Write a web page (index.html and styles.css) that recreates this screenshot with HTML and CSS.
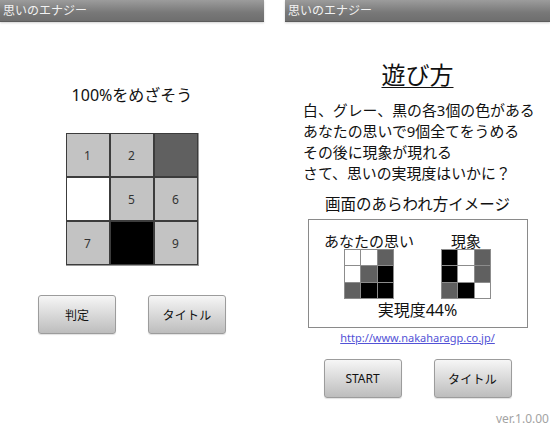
FILE: index.html
```html
<!DOCTYPE html>
<html lang="ja">
<head>
<meta charset="utf-8">
<title>思いのエナジー</title>
<link rel="stylesheet" href="styles.css">
</head>
<body>
<div class="device">
  <section class="screen screen-left">
    <header class="titlebar">思いのエナジー</header>
    <h1 class="goal">100%をめざそう</h1>
    <div class="board">
      <div class="cell gray">1</div>
      <div class="cell gray">2</div>
      <div class="cell dark"></div>
      <div class="cell white"></div>
      <div class="cell gray">5</div>
      <div class="cell gray">6</div>
      <div class="cell gray">7</div>
      <div class="cell black"></div>
      <div class="cell gray">9</div>
    </div>
    <div class="buttons">
      <button class="btn">判定</button>
      <button class="btn btn-kana">タイトル</button>
    </div>
  </section>

  <section class="screen screen-right">
    <header class="titlebar">思いのエナジー</header>
    <h1 class="howto">遊び方</h1>
    <p class="rules">白、グレー、黒の各3個の色がある<br>あなたの思いで9個全てをうめる<br>その後に現象が現れる<br>さて、思いの実現度はいかに？</p>
    <p class="caption">画面のあらわれ方イメージ</p>
    <div class="preview">
      <div class="preview-cols">
        <div class="preview-col">
          <span class="preview-label">あなたの思い</span>
          <div class="mini">
            <i class="m white"></i><i class="m white"></i><i class="m dark"></i>
            <i class="m white"></i><i class="m dark"></i><i class="m black"></i>
            <i class="m dark"></i><i class="m black"></i><i class="m black"></i>
          </div>
        </div>
        <div class="preview-col">
          <span class="preview-label">現象</span>
          <div class="mini">
            <i class="m black"></i><i class="m white"></i><i class="m dark"></i>
            <i class="m black"></i><i class="m white"></i><i class="m dark"></i>
            <i class="m dark"></i><i class="m black"></i><i class="m white"></i>
          </div>
        </div>
      </div>
      <p class="rate">実現度44%</p>
    </div>
    <a class="link" href="#">http://www.nakaharagp.co.jp/</a>
    <div class="buttons buttons-right">
      <button class="btn">START</button>
      <button class="btn btn-kana">タイトル</button>
    </div>
    <p class="version">ver.1.0.00</p>
  </section>
</div>
</body>
</html>
```

FILE: styles.css
```css
* { box-sizing: border-box; }

html, body {
  margin: 0;
  padding: 0;
  background: #ffffff;
}

body {
  width: 550px;
  height: 430px;
  overflow: hidden;
  font-family: "Noto Sans", "Noto Sans CJK JP", sans-serif;
  color: #111;
}

.device {
  display: flex;
  gap: 21px;
  height: 430px;
}

.screen {
  display: flex;
  flex-direction: column;
  align-items: center;
  height: 430px;
  background: #fff;
}

.screen-left { width: 264px; }
.screen-right { width: 265px; }

.titlebar {
  align-self: stretch;
  height: 22px;
  padding-left: 3px;
  font-size: 12px;
  line-height: 21px;
  color: #f2f2f2;
  background: linear-gradient(#9c9c9c, #787878 60%, #6e6e6e);
  border-bottom: 1px solid #5c5c5c;
  box-shadow: 0 1px 2px rgba(0, 0, 0, 0.18);
}

/* left screen */
.goal {
  margin: 62px 0 0;
  font-size: 16px;
  font-weight: normal;
  line-height: 22px;
  color: #111;
}

.board {
  margin-top: 27px;
  display: grid;
  grid-template-columns: repeat(3, 42px);
  grid-template-rows: repeat(3, 42px);
  gap: 2px;
  padding: 1px;
  background: #3c3c3c;
  border-right: 1px solid #9a9a9a;
  border-bottom: 1px solid #9a9a9a;
}

.cell {
  display: flex;
  align-items: center;
  justify-content: center;
  font-size: 12px;
  color: #333;
}

.gray { background: #c3c3c3; }
.dark { background: #606060; }
.white { background: #ffffff; }
.black { background: #000000; }

.buttons {
  margin-top: 29px;
  display: flex;
  gap: 32px;
}

.btn {
  width: 78px;
  height: 39px;
  padding: 0;
  border: 1px solid #9c9c9c;
  border-radius: 3px;
  background: linear-gradient(#f6f6f6, #dcdcdc 45%, #bdbdbd);
  font-family: inherit;
  font-size: 12px;
  color: #111;
  box-shadow: 0 1px 1px rgba(0, 0, 0, 0.12);
}

.btn-kana { letter-spacing: 0.3px; }

/* right screen */
.howto {
  margin: 38px 0 0;
  font-size: 24px;
  font-weight: normal;
  line-height: 30px;
  text-decoration: underline;
  text-decoration-thickness: 1px;
  text-underline-offset: 3px;
}

.rules {
  align-self: stretch;
  margin: 10px 0 0 18px;
  font-size: 14.9px;
  line-height: 21px;
  white-space: nowrap;
}

.caption {
  margin: 10px 0 0;
  font-size: 15.5px;
  line-height: 20px;
}

.preview {
  margin-top: 5px;
  width: 220px;
  height: 109px;
  border: 1px solid #8a8a8a;
  padding-top: 14px;
  display: flex;
  flex-direction: column;
  align-items: center;
}

.preview-cols {
  display: flex;
}

.preview-col {
  width: 97px;
  display: flex;
  flex-direction: column;
  align-items: center;
}

.preview-label {
  font-size: 15px;
  line-height: 14px;
  white-space: nowrap;
}

.mini {
  margin-top: 1px;
  width: 50px;
  height: 50px;
  display: grid;
  grid-template-columns: repeat(3, 1fr);
  grid-template-rows: repeat(3, 1fr);
  gap: 1px;
  padding: 1px;
  background: #8c8c8c;
}

.m { display: block; }

.rate {
  margin: 2px 0 0;
  font-size: 16px;
  line-height: 18px;
}

.link {
  margin-top: 2px;
  font-size: 11px;
  line-height: 16px;
  color: #5252d6;
  text-decoration: underline;
}

.buttons-right { margin-top: 13px; }

.version {
  align-self: flex-end;
  margin: 13px 1px 0 0;
  font-size: 12px;
  line-height: 16px;
  color: #a3a3a3;
}
```
